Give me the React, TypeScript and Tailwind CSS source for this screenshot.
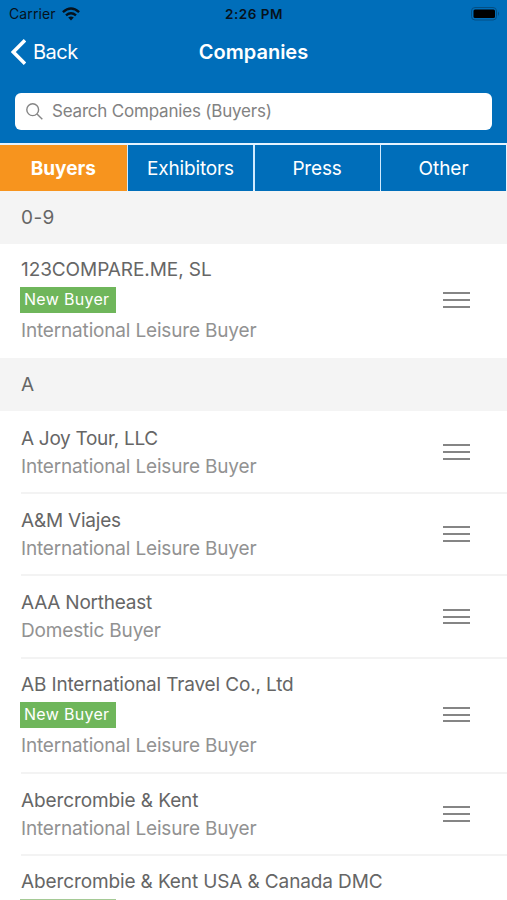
type Company = { name: string; kind: string; isNew?: boolean; height: string; tracking: string };

const BUYER = "International Leisure Buyer";

const numeric: Company[] = [
  { name: "123COMPARE.ME, SL", kind: BUYER, isNew: true, height: "h-[114px]", tracking: "tracking-[-0.08px]" },
];

const letterA: Company[] = [
  { name: "A Joy Tour, LLC", kind: BUYER, height: "h-[82px]", tracking: "tracking-[-0.3px]" },
  { name: "A&M Viajes", kind: BUYER, height: "h-[82px]", tracking: "tracking-[-0.2px]" },
  { name: "AAA Northeast", kind: "Domestic Buyer", height: "h-[83px]", tracking: "tracking-[-0.23px]" },
  { name: "AB International Travel Co., Ltd", kind: BUYER, isNew: true, height: "h-[115px]", tracking: "tracking-[-0.15px]" },
  { name: "Abercrombie & Kent", kind: BUYER, height: "h-[82px]", tracking: "tracking-[-0.1px]" },
];

const partial = "Abercrombie & Kent USA & Canada DMC";

function SectionHeader({ title }: { title: string }) {
  return (
    <div className="flex h-[53px] shrink-0 items-center bg-[#f4f4f4] pt-[2px] pl-[21px] text-[19px] tracking-[0.4px] text-[#666]">
      {title}
    </div>
  );
}

function DragHandle() {
  return (
    <div className="flex w-[27px] flex-col gap-[4.6px]">
      <span className="h-[2px] bg-[#858585]" />
      <span className="h-[2px] bg-[#858585]" />
      <span className="h-[2px] bg-[#858585]" />
    </div>
  );
}

function CompanyRow({ company, last }: { company: Company; last?: boolean }) {
  return (
    <li className={`ml-[21px] flex shrink-0 justify-between pr-[37px] ${company.height} ${last ? "" : "border-b-2 border-[#f3f3f3]"}`}>
      <div className={`flex flex-col items-start whitespace-nowrap text-[19px] leading-[28px] ${company.isNew ? "pt-[12px]" : "pt-[13px]"}`}>
        <span className={`text-[#666] ${company.tracking}`}>{company.name}</span>
        {company.isNew && (
          <span className="-ml-px mt-[3px] mb-[4px] h-[25.5px] w-[96px] bg-[#6fb65b] pl-[4px] text-[16px] leading-[25px] tracking-[0.3px] text-white">
            New Buyer
          </span>
        )}
        <span className="text-[#929292] tracking-[-0.17px]">{company.kind}</span>
      </div>
      <div className={`flex items-center ${company.isNew ? "pb-[2px]" : ""}`}>
        <DragHandle />
      </div>
    </li>
  );
}

export default function App() {
  return (
    <div className="flex h-[900px] w-[507px] flex-col overflow-hidden bg-white font-['Inter',sans-serif]">
      <header className="h-[143px] shrink-0 bg-[#006eba]">
        <div className="grid h-[27px] grid-cols-3 items-center text-[13px] text-[#06121c]">
          <div className="flex items-center gap-[6px] pl-[9px]">
            <span className="text-[14px] tracking-[0.1px]">Carrier</span>
            <svg width="18" height="14" viewBox="0 0 18 14" fill="none" stroke="#06121c" strokeWidth="2.4">
              <path d="M.9 5.2Q9-2.2 17.1 5.2" />
              <path d="M4 8.4q5-4.3 10 0" />
              <path d="M9 13.4 6.2 10.6q2.8-2.3 5.6 0z" fill="#06121c" stroke="none" />
            </svg>
          </div>
          <span className="pl-px pt-px text-center text-[13.5px] font-semibold tracking-[0.5px]">2:26 PM</span>
          <div className="flex items-center justify-end pr-[7px]">
            <svg width="29" height="14" viewBox="0 0 29 14">
              <rect x=".5" y=".5" width="25" height="12.5" rx="3.5" fill="none" stroke="#044f83" />
              <rect x="2.5" y="2.5" width="21.5" height="8.5" rx="1.5" fill="#000" />
              <path d="M27 4.5q2 2.2 0 4.4z" fill="#044f83" />
            </svg>
          </div>
        </div>
        <div className="grid h-[50px] grid-cols-3 items-center text-white">
          <div className="flex items-center gap-[7px] pl-[11px]">
            <svg width="15" height="26" viewBox="0 0 15 26" fill="none" stroke="white" strokeWidth="3.6">
              <path d="M14 1.3 2.3 13 14 24.7" />
            </svg>
            <span className="text-[20px] tracking-[-0.5px]">Back</span>
          </div>
          <h1 className="text-center text-[20px] font-semibold">Companies</h1>
        </div>
        <div className="mx-[15px] mt-[15.5px] flex h-[37px] items-center gap-[9px] rounded-[6px] bg-white pl-[11px] text-[#828282]">
          <svg width="17" height="17" viewBox="0 0 17 17" fill="none" stroke="#858585" strokeWidth="1.4">
            <circle cx="6.7" cy="6.7" r="5.9" />
            <path d="m11 11 5.3 5.3" />
          </svg>
          <span className="pt-[2px] text-[17px] tracking-[-0.2px]">Search Companies (Buyers)</span>
        </div>
      </header>
      <nav className="grid h-[48px] shrink-0 grid-cols-[126.5px_1fr_1fr_1fr] gap-[1.5px] border-t-2 border-r border-b border-[#e4f3ff] bg-[#cfeaff] text-center text-[19px] leading-[47px] text-white">
        <div className="bg-[#f7941e] font-bold">Buyers</div>
        <div className="bg-[#006eba] tracking-[-0.15px]">Exhibitors</div>
        <div className="bg-[#006eba] tracking-[-0.2px]">Press</div>
        <div className="bg-[#006eba]">Other</div>
      </nav>
      <SectionHeader title="0-9" />
      <ul className="shrink-0">
        {numeric.map((c) => (
          <CompanyRow key={c.name} company={c} last />
        ))}
      </ul>
      <SectionHeader title="A" />
      <ul className="min-h-0 flex-1 overflow-hidden pt-px">
        {letterA.map((c) => (
          <CompanyRow key={c.name} company={c} />
        ))}
        <li className="ml-[21px] flex flex-col items-start pt-[12px] text-[19px] leading-[28px] whitespace-nowrap">
          <span className="tracking-[-0.12px] text-[#666]">{partial}</span>
          <span className="-ml-px mt-[3px] h-[25px] w-[96px] bg-[#a5ca96]" />
        </li>
      </ul>
    </div>
  );
}
